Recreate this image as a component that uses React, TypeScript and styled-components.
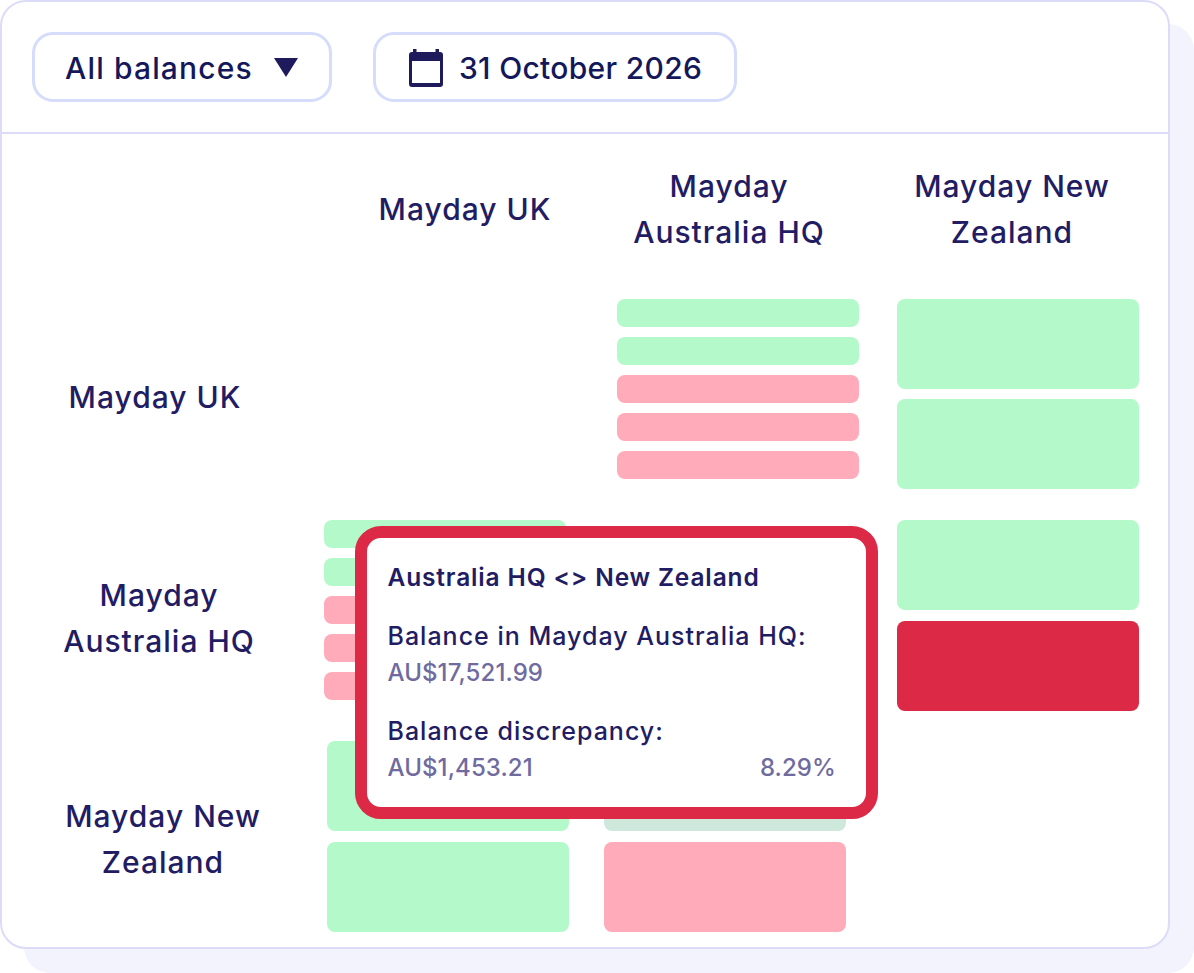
import styled, { createGlobalStyle } from 'styled-components'

const GlobalStyle = createGlobalStyle`
  html, body {
    margin: 0;
    padding: 0;
    background: #fff;
  }
  body {
    min-height: 973px;
    font-family: Inter, "Noto Sans", "Liberation Sans", sans-serif;
    color: #221c63;
  }
`

const Card = styled.main`
  box-sizing: border-box;
  width: 1170px;
  height: 949px;
  position: relative;
  background: #fff;
  border: 2px solid #dddcf8;
  border-radius: 26px;
  box-shadow: 24px 24px 0 #f3f3fd;
`

const Toolbar = styled.div`
  display: flex;
  gap: 41px;
  height: 132px;
  box-sizing: border-box;
  padding: 30px;
  border-bottom: 2px solid #dddcf8;
`

const Pill = styled.button`
  display: flex;
  align-items: center;
  box-sizing: border-box;
  height: 70px;
  padding: 1px 0 0 ${p => p.$pad}px;
  gap: ${p => p.$gap}px;
  width: ${p => p.$width}px;
  background: #fff;
  border: 3px solid #d6dcfb;
  border-radius: 21px;
  font: 500 30px Inter, sans-serif;
  letter-spacing: ${p => p.$tracking}px;
  color: #14185a;
  white-space: nowrap;

  svg { flex-shrink: 0; }
`

const Headers = styled.div`
  display: grid;
  grid-template-columns: 333px 264px 264px 302px;
  height: 165px;
  align-items: center;
  box-sizing: border-box;
  padding-bottom: 15px;
  margin-left: -2px;
`

const Heading = styled.div`
  font-size: 30px;
  font-weight: 500;
  letter-spacing: 1px;
  line-height: 46px;
  text-align: center;
`

const Row = styled.div`
  display: grid;
  grid-template-columns: ${p => p.$labelWidth}px 242px ${p => p.$gapA}px 242px ${p => p.$gapB}px 242px;
  margin-left: -2px;
  margin-bottom: ${p => p.$bottom}px;
`

const RowLabel = styled(Heading)`
  align-self: center;
  padding-top: 6px;
  width: ${p => p.$center * 2}px;
`

const Stack = styled.div`
  display: flex;
  flex-direction: column;
  gap: ${p => p.$gap}px;
  grid-column: ${p => p.$col};
`

const Bar = styled.div`
  height: ${p => p.$h}px;
  border-radius: 8px;
  background: ${p => ({ green: '#b3f9c9', pink: '#ffabb9', red: '#dc2a46', muted: '#cfe8dc' }[p.$tone])};
`

const Tooltip = styled.aside`
  position: absolute;
  left: 353px;
  top: 524px;
  box-sizing: border-box;
  width: 523px;
  height: 293px;
  padding: 21px 30px 0 20.5px;
  background: #fff;
  border: 12px solid #dc2a46;
  border-radius: 26px;
  font-weight: 500;
`

const TooltipTitle = styled.div`
  font-size: 24.5px;
  font-weight: 600;
  letter-spacing: 0.85px;
  line-height: 36px;
  margin-bottom: 23px;
`

const Line = styled.div`
  font-size: 25px;
  letter-spacing: 1px;
  line-height: 36px;
`

const Values = styled.div`
  display: flex;
  justify-content: space-between;
  font-size: 24px;
  letter-spacing: 0.1px;
  line-height: 36px;
  color: #6f6b9f;
  padding-top: 1px;
  margin-bottom: ${p => p.$bottom}px;
`

function CalendarIcon() {
  return (
    <svg width="34" height="38" viewBox="0 0 34 38" fill="none">
      <path
        fillRule="evenodd"
        fill="#1f1a5c"
        d="M4 0h3.5v3h19V0H30v3h1a3 3 0 0 1 3 3v29a3 3 0 0 1-3 3H3a3 3 0 0 1-3-3V6a3 3 0 0 1 3-3h1V0ZM3 12v22h28V12H3Z"
      />
    </svg>
  )
}

function CaretIcon() {
  return (
    <svg width="24" height="19" viewBox="0 0 24 19">
      <path fill="#1f1a5c" d="M0 0h24L12 19Z" />
    </svg>
  )
}

function bars(tones: string[], h: number) {
  return tones.map((tone, i) => <Bar key={i} $tone={tone} $h={h} />)
}

export default function App() {
  return (
    <>
      <GlobalStyle />
      <Card>
        <Toolbar>
          <Pill $pad={30} $gap={21} $width={300} $tracking={1.15}>
            All balances
            <CaretIcon />
          </Pill>
          <Pill $pad={33} $gap={16} $width={364} $tracking={0.3}>
            <CalendarIcon />
            31 October 2026
          </Pill>
        </Toolbar>

        <Headers>
          <span />
          <Heading>Mayday UK</Heading>
          <Heading>Mayday<br />Australia HQ</Heading>
          <Heading>Mayday New<br />Zealand</Heading>
        </Headers>

        <Row $labelWidth={324} $gapA={51} $gapB={38} $bottom={31}>
          <RowLabel $center={155}>Mayday UK</RowLabel>
          <Stack $col={4} $gap={10.5}>
            {bars(['green', 'green', 'pink', 'pink', 'pink'], 27.5)}
          </Stack>
          <Stack $col={6} $gap={10}>
            {bars(['green', 'green'], 90)}
          </Stack>
        </Row>

        <Row $labelWidth={324} $gapA={51} $gapB={38} $bottom={30}>
          <RowLabel $center={159}>Mayday<br />Australia HQ</RowLabel>
          <Stack $col={2} $gap={10.5}>
            {bars(['green', 'green', 'pink', 'pink', 'pink'], 27.5)}
          </Stack>
          <Stack $col={6} $gap={10.5}>
            {bars(['green', 'red'], 90)}
          </Stack>
        </Row>

        <Row $labelWidth={327} $gapA={35} $gapB={38} $bottom={0}>
          <RowLabel $center={163}>Mayday New<br />Zealand</RowLabel>
          <Stack $col={2} $gap={11}>
            {bars(['green', 'green'], 90)}
          </Stack>
          <Stack $col={4} $gap={11}>
            {bars(['muted', 'pink'], 90)}
          </Stack>
        </Row>

        <Tooltip>
          <TooltipTitle>Australia HQ &lt;&gt; New Zealand</TooltipTitle>
          <Line>Balance in Mayday Australia HQ:</Line>
          <Values $bottom={22}>
            <span>AU$17,521.99</span>
          </Values>
          <Line>Balance discrepancy:</Line>
          <Values $bottom={0}>
            <span>AU$1,453.21</span>
            <span>8.29%</span>
          </Values>
        </Tooltip>
      </Card>
    </>
  )
}
